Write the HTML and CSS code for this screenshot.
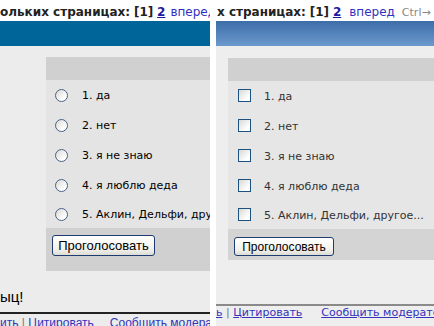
FILE: index.html
```html
<!DOCTYPE html>
<html lang="ru">
<head>
    <meta charset="UTF-8">
    <meta name="viewport" content="width=device-width, initial-scale=1.0">
    <title>Голосование</title>
    <link rel="stylesheet" href="styles.css">
</head>
<body>
    <div class="shots">
        <section class="shot shot-radio">
            <div class="pager">
                <b>ольких страницах:</b> <b>[1]</b> <a class="page">2</a><a class="next">вперед</a>
            </div>
            <div class="bar"></div>
            <div class="body">
                <form class="poll">
                    <div class="poll-head"></div>
                    <label class="option"><input type="radio" name="vote"><span>1. да</span></label>
                    <label class="option"><input type="radio" name="vote"><span>2. нет</span></label>
                    <label class="option"><input type="radio" name="vote"><span>3. я не знаю</span></label>
                    <label class="option"><input type="radio" name="vote"><span>4. я люблю деда</span></label>
                    <label class="option"><input type="radio" name="vote"><span>5. Аклин, Дельфи, другое...</span></label>
                    <div class="poll-foot"><button type="button" class="btn">Проголосовать</button></div>
                </form>
                <p class="post-end">ыц!</p>
                <div class="post-links">
                    <a>ить</a> <span class="sep">|</span> <a>Цитировать</a><a class="report">Сообщить модератору</a>
                </div>
            </div>
        </section>

        <div class="gap"></div>

        <section class="shot shot-check">
            <div class="pager">
                <b>х страницах:</b> <b>[1]</b> <a class="page">2</a><a class="next">вперед</a><span class="hint">Ctrl→</span>
            </div>
            <div class="bar"></div>
            <div class="body">
                <form class="poll">
                    <div class="poll-head"></div>
                    <label class="option"><input type="checkbox"><span>1. да</span></label>
                    <label class="option"><input type="checkbox"><span>2. нет</span></label>
                    <label class="option"><input type="checkbox"><span>3. я не знаю</span></label>
                    <label class="option"><input type="checkbox"><span>4. я люблю деда</span></label>
                    <label class="option"><input type="checkbox"><span>5. Аклин, Дельфи, другое...</span></label>
                    <div class="poll-foot"><button type="button" class="btn">Проголосовать</button></div>
                </form>
                <div class="post-links">
                    <a>ь</a> <span class="sep">|</span> <a>Цитировать</a><a class="report">Сообщить модератору</a>
                </div>
            </div>
        </section>
    </div>
</body>
</html>
```

FILE: styles.css
```css
body, p, button {
    margin: 0;
    padding: 0;
}

body {
    background: #fff;
    font-family: 'DejaVu Sans', Verdana, sans-serif;
    width: 434px;
    height: 326px;
    overflow: hidden;
}

.shots {
    display: flex;
    height: 326px;
}

.shot {
    overflow: hidden;
    display: flex;
    flex-direction: column;
    white-space: nowrap;
}

.shot-radio {
    width: 210px;
}

.gap {
    width: 6px;
    flex-shrink: 0;
}

.shot-check {
    width: 218px;
}

/* top line with page numbers */
.pager {
    height: 21px;
    box-sizing: border-box;
    padding-top: 3px;
    line-height: 18px;
    font-size: 12px;
    color: #222;
    overflow: hidden;
}

.shot-check .pager {
    padding-left: 1px;
}

.pager a {
    color: #3030c0;
}

.pager .page {
    font-weight: bold;
    color: #1a1aa0;
    text-decoration: underline;
}

.pager .next {
    margin-left: 8px;
}

.shot-radio .pager .next {
    margin-left: 5px;
}

.pager .hint {
    color: #888;
    font-size: 11px;
    margin-left: 7px;
}

.bar {
    height: 25px;
    flex-shrink: 0;
}

.shot-radio .bar {
    background: #006699;
}

.shot-check .bar {
    background: linear-gradient(to bottom, #3d6da8, #6c99cd);
}

.body {
    flex: 1;
    overflow: hidden;
}

.shot-radio .body {
    background: #ececec;
    padding: 11px 0 0 46px;
}

.shot-check .body {
    background: #eeeeee;
    padding: 12px 0 0 12px;
}

/* poll box */
.poll {
    font-size: 11px;
}

.shot-radio .poll {
    background: #e4e4e4;
    color: #000;
}

.shot-check .poll {
    background: #e6e6e6;
    color: #333;
}

.poll-head {
    height: 23px;
    background: #d0d0d0;
}

.option {
    display: flex;
    align-items: center;
    height: 30px;
}

.option:last-of-type {
    height: 28px;
}

.shot-radio .option {
    padding-left: 9px;
}

.shot-check .option {
    padding-left: 10px;
}

.option input {
    appearance: none;
    -webkit-appearance: none;
    margin: 0;
    width: 13px;
    height: 13px;
    flex-shrink: 0;
    box-sizing: border-box;
    border: 1px solid #4a6286;
    background: linear-gradient(135deg, #d8d8d2, #ffffff 75%);
}

.option input[type="radio"] {
    border-radius: 50%;
    margin-right: 14px;
}

.option input[type="checkbox"] {
    border-color: #1c5180;
    margin-right: 13px;
    margin-top: -1px;
}

.poll-foot {
    background: #d0d0d0;
    padding-left: 6px;
    box-sizing: border-box;
}

.shot-radio .poll-foot {
    height: 43px;
    padding-top: 7px;
}

.shot-check .poll-foot {
    height: 31px;
    padding-top: 8px;
    background: #d4d4d4;
}

.btn {
    font-family: 'Liberation Sans', Arial, sans-serif;
    color: #000;
    border: 1px solid #1d3c72;
    border-radius: 3px;
    background: linear-gradient(to bottom, #ffffff, #f2f1ec 70%, #dcdbd4);
    cursor: pointer;
}

.shot-radio .btn {
    width: 103px;
    height: 21px;
    font-size: 13px;
}

.shot-check .btn {
    width: 100px;
    height: 19px;
    font-size: 12px;
}

.post-end {
    font-family: 'Liberation Sans', Arial, sans-serif;
    font-size: 15px;
    line-height: 18px;
    margin: 17px 0 6px -46px;
}

.post-links {
    font-size: 11px;
    line-height: 14px;
}

.post-links a {
    color: #3333bb;
    text-decoration: underline;
}

.post-links .sep {
    color: #777;
}

.post-links .report {
    margin-left: 19px;
}

.shot-radio .post-links {
    font-family: 'Liberation Sans', Arial, sans-serif;
    font-size: 12px;
    margin-left: -46px;
    border-top: 2px solid #222;
    padding-top: 2px;
}

.shot-radio .post-links .report {
    margin-left: 16px;
}

.shot-check .post-links {
    margin: 44px 0 0 -12px;
    border-top: 2px solid #8a8a8a;
}
```
